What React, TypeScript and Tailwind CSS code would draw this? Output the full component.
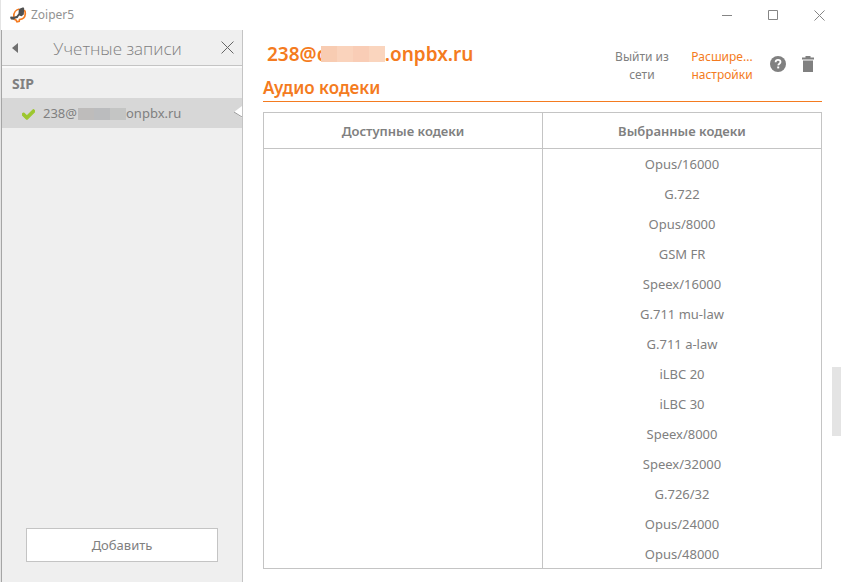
import { FaCheck } from "react-icons/fa";

const SELECTED_CODECS = [
    "Opus/16000",
    "G.722",
    "Opus/8000",
    "GSM FR",
    "Speex/16000",
    "G.711 mu-law",
    "G.711 a-law",
    "iLBC 20",
    "iLBC 30",
    "Speex/8000",
    "Speex/32000",
    "G.726/32",
    "Opus/24000",
    "Opus/48000",
];

const Logo = () => (
    <svg width="17" height="16" viewBox="0 0 17 16" fill="none" aria-hidden="true">
        <path d="M9.500 2C6 2.500 3.600 5.500 3.800 9.500c0 2 .8 3.300 2.200 3.500l1 1.800 2.200-.5.300-1.800c3.300-.2 5.500-2.200 5.800-5.500.1-1.800-.2-3-1-4" stroke="#f47b20" strokeWidth="1.700" />
        <path d="M10 1.500L13.300.3l.9 1.200-.4 6-2.300 1.700-2.300-.7L7.600 11l-3 .8-.6 1L1 12.500.1 10.800l.5-1.200 3 .2L6.500 9l2-2.500.3-3.800z" fill="#505050" />
    </svg>
);

const CloseIcon = ({ className }: { className: string }) => (
    <svg className={className} viewBox="0 0 12 12" fill="none" stroke="currentColor" aria-hidden="true">
        <path d="M.5.5l11 11M11.500.5l-11 11" vectorEffect="non-scaling-stroke" />
    </svg>
);

const TitleBar = () => (
    <header className="flex h-[30px] shrink-0 items-center justify-between bg-white pr-4 pl-[9px]">
        <div className="flex items-center gap-1 text-[12px] text-[#929292]">
            <Logo />
            <span>Zoiper5</span>
        </div>
        <div className="flex items-center gap-9 text-[#858585]">
            <button aria-label="Свернуть">
                <svg width="10" height="11" viewBox="0 0 10 11" stroke="currentColor"><path d="M0 5.500h10" /></svg>
            </button>
            <button aria-label="Развернуть">
                <svg width="10" height="10" viewBox="0 0 10 10" fill="none" stroke="currentColor"><path d="M.5.5h9v9h-9z" /></svg>
            </button>
            <button aria-label="Закрыть">
                <CloseIcon className="size-[11px]" />
            </button>
        </div>
    </header>
);

const Sidebar = () => (
    <aside className="flex w-[241px] shrink-0 flex-col border-r border-[#c4c4c4] bg-[#efefef] text-[#808080]">
        <div className="flex h-9 items-center justify-between border-b border-[#c4c4c4] pr-2 pl-2.5">
            <button aria-label="Назад">
                <svg width="6" height="10" viewBox="0 0 6 10" fill="#707070"><path d="M6 0v10L0 5z" /></svg>
            </button>
            <h2 className="pt-0.5 pr-1 font-['Open_Sans'] text-[17px] font-light">Учетные записи</h2>
            <button aria-label="Закрыть панель" className="text-[#666]">
                <CloseIcon className="size-[13px]" />
            </button>
        </div>
        <div className="flex h-8 items-center border-t-2 border-[#fafafa] pl-2.5 text-[14px] font-bold">SIP</div>
        <a href="#account" className="relative flex h-[30px] items-center bg-[#d7d7d7] pt-0.5 pl-5 text-[13px]">
            <FaCheck className="mr-2 size-[13px] text-[#9dc72f]" stroke="currentColor" strokeWidth="40" />
            <span>238@</span>
            <span className="ml-px flex h-3">
                <span className="w-4 bg-[#bebcbb]" />
                <span className="w-4 bg-[#bbbcbe]" />
                <span className="w-4 bg-[#c4c5c4]" />
            </span>
            <span>onpbx.ru</span>
            <svg className="absolute top-2 right-0" width="8" height="12" viewBox="0 0 8 12" aria-hidden="true">
                <path d="M8 0v12L0 6z" fill="#fff" />
                <path d="M0 6l8 5" stroke="#999" />
            </svg>
        </a>
        <div className="mt-auto px-6 pb-5">
            <button className="h-[34px] w-full border border-[#c4c4c4] bg-white pt-0.5 text-[13px]">Добавить</button>
        </div>
    </aside>
);

const AccountHeader = () => (
    <div className="flex items-start justify-between border-b border-[#f47b20] pb-0.5">
        <div className="flex flex-col gap-[11px] font-semibold">
            <h1 className="flex items-center pl-1 text-[19px] leading-6">
                <span>238@</span>
                <span className="w-1 overflow-hidden">c</span>
                <span className="flex h-4">
                    <span className="w-4 bg-[#f8ccb2]" />
                    <span className="w-4 bg-[#fad3bc]" />
                    <span className="w-4 bg-[#f9cdb6]" />
                    <span className="w-4 bg-[#fad5be]" />
                </span>
                <span>.onpbx.ru</span>
            </h1>
            <h2 className="text-[17px] leading-[22px]">Аудио кодеки</h2>
        </div>
        <div className="flex items-start pt-1.5 pr-2 text-[12px] leading-[18px] text-[#808080]">
            <button className="w-20 px-2">Выйти из сети</button>
            <button className="w-20 text-[#f47b20]">
                Расшире...<br />настройки
            </button>
            <button aria-label="Справка" className="mt-2 ml-2">
                <svg width="16" height="16" viewBox="0 0 16 16" aria-hidden="true">
                    <circle cx="8" cy="8" r="8" fill="#808080" />
                    <path d="M5.600 6.200C5.700 4.700 6.600 3.900 8 3.900c1.500 0 2.500.8 2.500 2 0 1.700-2.100 1.800-2.300 3.500" fill="none" stroke="#fff" strokeWidth="1.800" />
                    <path d="M7.200 10.500h2v1.900h-2z" fill="#fff" />
                </svg>
            </button>
            <button aria-label="Удалить" className="mt-2 ml-4">
                <svg width="12" height="16" viewBox="0 0 12 16" fill="#808080" aria-hidden="true">
                    <path d="M3.500 0h5v1.500H12v2H0v-2h3.500zM1 4.500h10V16H1z" />
                </svg>
            </button>
        </div>
    </div>
);

const CodecTable = () => (
    <table className="mt-2.5 w-full table-fixed border-collapse border border-[#c4c4c4] text-center text-[13px] text-[#808080]">
        <thead>
            <tr className="h-9">
                <th className="border border-[#c4c4c4] pt-0.5 font-semibold">Доступные кодеки</th>
                <th className="border border-[#c4c4c4] pt-0.5 font-semibold">Выбранные кодеки</th>
            </tr>
        </thead>
        <tbody>
            {SELECTED_CODECS.map((codec, index) => (
                <tr key={codec} className="h-[30px]">
                    {index === 0 && <td rowSpan={SELECTED_CODECS.length} className="border border-[#c4c4c4]" />}
                    <td className="pt-0.5">{codec}</td>
                </tr>
            ))}
        </tbody>
    </table>
);

export default function App() {
    return (
        <div className="flex min-h-screen flex-col border-l border-[#e4e4e4] bg-white font-['Noto_Sans','Open_Sans',sans-serif]">
            <TitleBar />
            <div className="flex grow border-l border-[#a5a5a5]">
                <Sidebar />
                <main className="min-w-0 grow pt-3 pr-[19px] pb-3 pl-5 text-[#f47b20]">
                    <AccountHeader />
                    <CodecTable />
                </main>
                <div className="-ml-[9px] w-[9px] shrink-0 pt-[337px]">
                    <div className="h-[69px] bg-[#e4e4e4]" />
                </div>
            </div>
        </div>
    );
}
